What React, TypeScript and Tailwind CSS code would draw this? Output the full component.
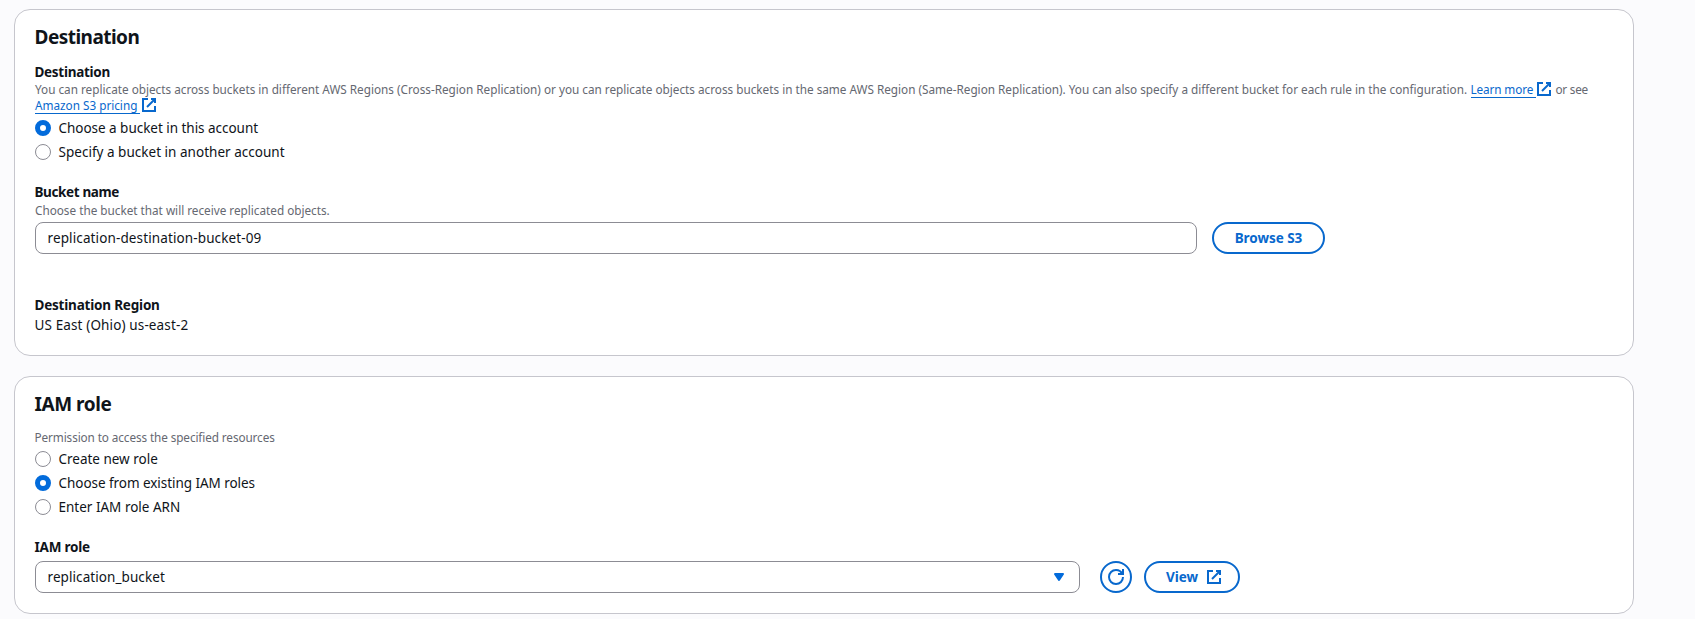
import React from "react";

function ExternalIcon({ className = "" }: { className?: string }) {
  return (
    <svg viewBox="0 0 16 16" width="16" height="16" fill="none" stroke="currentColor" strokeWidth="2" className={`shrink-0 ${className}`}>
      <path d="M10 2h4v4" />
      <path d="m6 10 8-8" />
      <path d="M14 9.05V14H2V2h5" />
    </svg>
  );
}

function Radio({ checked, tracking, children }: { checked?: boolean; tracking: string; children: string }) {
  return (
    <label className="flex h-5 items-center gap-[7.5px]">
      <span
        className={`size-4 shrink-0 rounded-full bg-white ${
          checked ? "border-5 border-[#026bdb]" : "border border-[#8c8c94]"
        }`}
      />
      <span className={`text-[13.5px] leading-5 ${tracking}`}>{children}</span>
    </label>
  );
}

function Label({ tracking, children }: { tracking: string; children: string }) {
  return <div className={`-ml-[0.5px] text-[13.5px] leading-5 font-bold ${tracking}`}>{children}</div>;
}

export default function App() {
  return (
    <main className="flex h-[619px] flex-col gap-5 overflow-hidden bg-[#fbfbfd] pt-[9px] pl-3.5 font-['Noto_Sans',sans-serif] whitespace-nowrap text-[#0f141a]">
      <section className="flex h-[347px] w-[1620px] shrink-0 flex-col rounded-2xl border border-[#c6c6cd] bg-white px-5 pt-[15px]">
        <h2 className="-ml-[0.5px] text-[19px] leading-6 font-bold tracking-[-0.53px]">Destination</h2>
        <div className="mt-[13px]">
          <Label tracking="tracking-[-0.29px]">Destination</Label>
          <div className="-mt-px text-[11.75px] leading-4 text-[#656871]">
            <div className="flex h-4 items-center">
              <span className="w-[1435.5px] tracking-[-0.005px]">
                You can replicate objects across buckets in different AWS Regions (Cross-Region Replication) or you can
                replicate objects across buckets in the same AWS Region (Same-Region Replication). You can also specify
                a different bucket for each rule in the configuration.
              </span>
              <a className="h-[17px] w-[65.5px] border-b border-[#0868cd] tracking-[-0.12px] text-[#0868cd]">Learn more</a>
              <ExternalIcon className="text-[#0868cd]" />
              <span className="ml-[3.5px] tracking-[-0.25px]">or see</span>
            </div>
            <div className="flex h-4 items-center text-[#0868cd]">
              <a className="h-[17px] w-[105px] border-b border-[#0868cd] tracking-[-0.01px]">Amazon S3 pricing</a>
              <ExternalIcon className="ml-px" />
            </div>
          </div>
        </div>
        <div className="mt-[5px] flex flex-col gap-1">
          <Radio checked tracking="tracking-[-0.03px]">Choose a bucket in this account</Radio>
          <Radio tracking="tracking-[0.02px]">Specify a bucket in another account</Radio>
        </div>
        <div className="mt-5">
          <Label tracking="tracking-[-0.37px]">Bucket name</Label>
          <div className="text-[11.75px] leading-4 tracking-[-0.01px] text-[#656871]">
            Choose the bucket that will receive replicated objects.
          </div>
        </div>
        <div className="mt-1 flex gap-[15px]">
          <div className="flex h-8 w-[1162px] items-center rounded-lg border border-[#8c8c94] px-[11.5px] text-[13.5px] leading-5 tracking-[0.12px]">
            replication-destination-bucket-09
          </div>
          <button className="flex h-8 w-[113px] items-center justify-center rounded-full border-2 border-[#0868cd] text-[13.5px] leading-5 font-bold tracking-[-0.04px] text-[#0868cd]">
            Browse S3
          </button>
        </div>
        <div className="mt-[41px]">
          <Label tracking="tracking-[-0.2px]">Destination Region</Label>
          <div className="-ml-[0.5px] text-[13.5px] leading-5 tracking-[0.13px]">US East (Ohio) us-east-2</div>
        </div>
      </section>

      <section className="flex h-[238px] w-[1620px] shrink-0 flex-col rounded-2xl border border-[#c6c6cd] bg-white px-5 pt-[15px]">
        <h2 className="-ml-[0.5px] text-[19px] leading-6 font-bold tracking-[-0.45px]">IAM role</h2>
        <div className="mt-[13px] -ml-[0.5px] text-[11.75px] leading-4 tracking-[-0.1px] text-[#656871]">
          Permission to access the specified resources
        </div>
        <div className="mt-1 flex flex-col gap-1">
          <Radio tracking="tracking-[-0.01px]">Create new role</Radio>
          <Radio checked tracking="tracking-[-0.05px]">Choose from existing IAM roles</Radio>
          <Radio tracking="tracking-[0px]">Enter IAM role ARN</Radio>
        </div>
        <div className="mt-5">
          <Label tracking="tracking-[-0.22px]">IAM role</Label>
        </div>
        <div className="mt-1 flex">
          <div className="flex h-8 w-[1045px] items-center justify-between rounded-lg border border-[#8c8c94] pr-3 pl-[11.5px] text-[13.5px] leading-5 tracking-[0.08px]">
            <span>replication_bucket</span>
            <svg viewBox="0 0 16 16" width="16" height="16" fill="#026bdb" stroke="#026bdb" strokeWidth="2" strokeLinejoin="round">
              <path d="M4 5h8l-4 6-4-6z" />
            </svg>
          </div>
          <button className="ml-5 flex size-8 items-center justify-center rounded-full border-2 border-[#0868cd] text-[#0868cd]">
            <svg viewBox="0 0 16 16" width="16" height="16" fill="none" stroke="currentColor" strokeWidth="2">
              <path d="M10 5h5V0" />
              <path d="M15 8a6.957 6.957 0 0 1-7 7 6.957 6.957 0 0 1-7-7 6.957 6.957 0 0 1 7-7 6.87 6.87 0 0 1 6.3 4" />
            </svg>
          </button>
          <button className="ml-3 flex h-8 w-24 items-center gap-2 rounded-full border-2 border-[#0868cd] pl-5 text-[13.5px] leading-5 font-bold tracking-[-0.04px] text-[#0868cd]">
            View
            <ExternalIcon />
          </button>
        </div>
      </section>
    </main>
  );
}
